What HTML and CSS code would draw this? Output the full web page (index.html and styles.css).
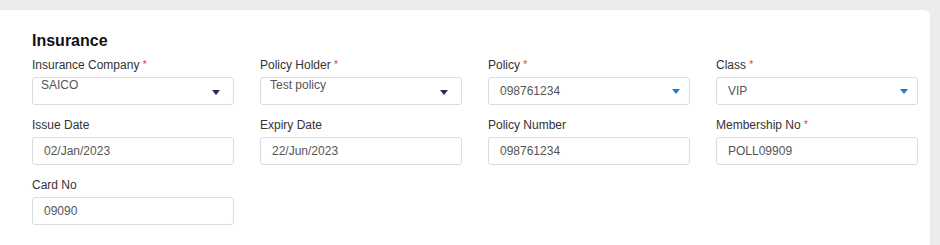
FILE: index.html
```html
<!DOCTYPE html>
<html lang="en">
<head>
    <meta charset="UTF-8">
    <meta name="viewport" content="width=device-width, initial-scale=1.0">
    <title>Insurance</title>
    <link rel="stylesheet" href="styles.css">
</head>
<body>
    <div class="page">
        <div class="card">
            <h2 class="section-title">Insurance</h2>

            <div class="form-grid">
                <div class="field">
                    <label class="field-label">Insurance Company <span class="req">*</span></label>
                    <div class="input select select-tall">
                        <span class="value">SAICO</span>
                        <span class="caret caret-dark"></span>
                    </div>
                </div>

                <div class="field">
                    <label class="field-label">Policy Holder <span class="req">*</span></label>
                    <div class="input select select-tall select-holder">
                        <span class="value">Test policy</span>
                        <span class="caret caret-dark"></span>
                    </div>
                </div>

                <div class="field">
                    <label class="field-label">Policy <span class="req">*</span></label>
                    <div class="input select">
                        <span class="value">098761234</span>
                        <span class="caret caret-blue"></span>
                    </div>
                </div>

                <div class="field">
                    <label class="field-label">Class <span class="req">*</span></label>
                    <div class="input select">
                        <span class="value">VIP</span>
                        <span class="caret caret-blue"></span>
                    </div>
                </div>

                <div class="field">
                    <label class="field-label">Issue Date</label>
                    <div class="input"><span class="value">02/Jan/2023</span></div>
                </div>

                <div class="field">
                    <label class="field-label">Expiry Date</label>
                    <div class="input"><span class="value">22/Jun/2023</span></div>
                </div>

                <div class="field">
                    <label class="field-label">Policy Number</label>
                    <div class="input"><span class="value">098761234</span></div>
                </div>

                <div class="field">
                    <label class="field-label">Membership No <span class="req">*</span></label>
                    <div class="input"><span class="value">POLL09909</span></div>
                </div>

                <div class="field">
                    <label class="field-label">Card No</label>
                    <div class="input"><span class="value">09090</span></div>
                </div>
            </div>
        </div>
        <div class="scroll-rail"></div>
    </div>
</body>
</html>
```

FILE: styles.css
```css
* {
    margin: 0;
    padding: 0;
    box-sizing: border-box;
}

body {
    font-family: "Liberation Sans", Arial, sans-serif;
    background: #ebebeb;
    color: #333;
    height: 245px;
    overflow: hidden;
}

.page {
    display: flex;
    padding-top: 10px;
    height: 100%;
}

.card {
    width: 930px;
    background: #fff;
    border-radius: 0 6px 0 0;
    padding: 22px 0 0 32px;
}

.scroll-rail {
    flex: 1;
    background: #ececec;
}

.section-title {
    font-size: 16px;
    line-height: 18px;
    font-weight: 700;
    color: #111;
    margin-bottom: 8px;
}

.form-grid {
    display: grid;
    grid-template-columns: repeat(4, 202px);
    column-gap: 26px;
    row-gap: 13px;
}

.field {
    display: flex;
    flex-direction: column;
}

.field-label {
    font-size: 12px;
    line-height: 14px;
    color: #333;
    margin-bottom: 5px;
}

.req {
    color: #e53935;
    font-size: 10px;
    vertical-align: top;
}

.input {
    height: 28px;
    border: 1px solid #dcdcdc;
    border-radius: 3px;
    display: flex;
    align-items: center;
    padding: 0 11px;
    font-size: 12px;
    color: #555;
}

.select {
    justify-content: space-between;
    padding-right: 9px;
}

.select-tall {
    align-items: stretch;
    padding: 0 13px 0 8px;
}

.select-holder {
    padding-left: 9px;
}

.select-tall .value {
    line-height: 14px;
}

.caret {
    width: 0;
    height: 0;
    border-left: 4px solid transparent;
    border-right: 4px solid transparent;
    border-top: 5px solid;
}

.caret-dark {
    border-top-color: #2b2b5c;
    align-self: flex-end;
    margin-bottom: 9px;
}

.caret-blue {
    border-top-color: #1a7fd4;
}
```
